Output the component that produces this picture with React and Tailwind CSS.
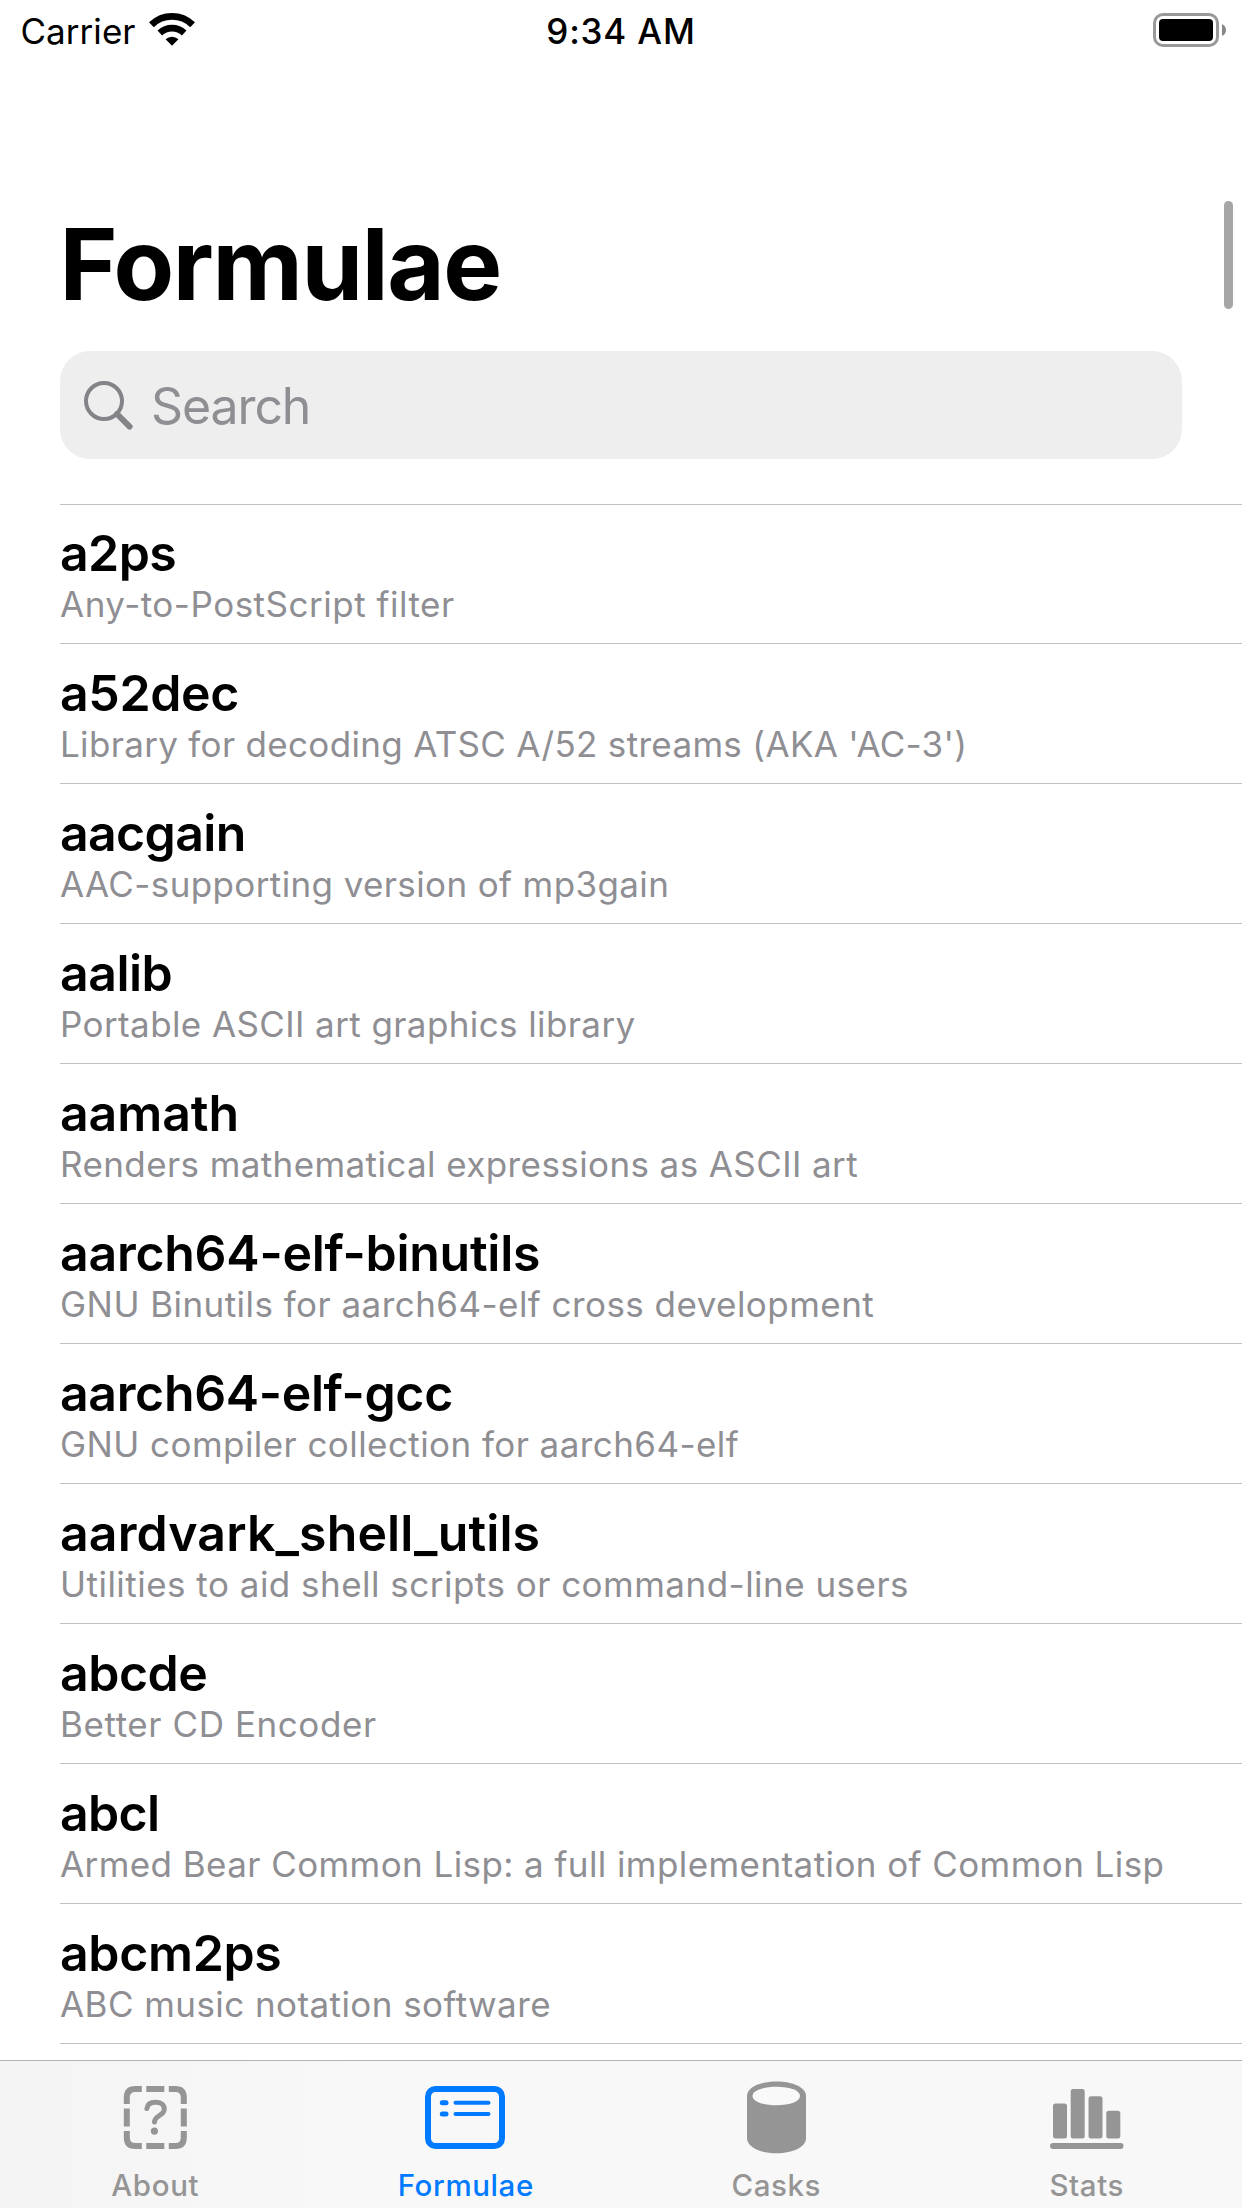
import React from "react";

const FORMULAE = [
  { name: "a2ps", nameTracking: "tracking-[-0.6px]", desc: "Any-to-PostScript filter", descTracking: "tracking-[0.51px]" },
  { name: "a52dec", nameTracking: "tracking-[-0.35px]", desc: "Library for decoding ATSC A/52 streams (AKA 'AC-3')", descTracking: "tracking-[0.32px]" },
  { name: "aacgain", nameTracking: "tracking-[-0.65px]", desc: "AAC-supporting version of mp3gain", descTracking: "tracking-[0.38px]" },
  { name: "aalib", nameTracking: "tracking-[-0.5px]", desc: "Portable ASCII art graphics library", descTracking: "tracking-[0.4px]" },
  { name: "aamath", nameTracking: "tracking-[-0.1px]", desc: "Renders mathematical expressions as ASCII art", descTracking: "tracking-[0.4px]" },
  { name: "aarch64-elf-binutils", nameTracking: "tracking-[-0.26px]", desc: "GNU Binutils for aarch64-elf cross development", descTracking: "tracking-[0.45px]" },
  { name: "aarch64-elf-gcc", nameTracking: "tracking-[-0.35px]", desc: "GNU compiler collection for aarch64-elf", descTracking: "tracking-[0.43px]" },
  { name: "aardvark_shell_utils", nameTracking: "tracking-[0.12px]", desc: "Utilities to aid shell scripts or command-line users", descTracking: "tracking-[0.48px]" },
  { name: "abcde", nameTracking: "tracking-[-0.5px]", desc: "Better CD Encoder", descTracking: "tracking-[0.58px]" },
  { name: "abcl", nameTracking: "tracking-[-0.65px]", desc: "Armed Bear Common Lisp: a full implementation of Common Lisp", descTracking: "tracking-[0.42px]" },
  { name: "abcm2ps", nameTracking: "tracking-[-0.35px]", desc: "ABC music notation software", descTracking: "tracking-[0.43px]" },
];

function WifiIcon() {
  return (
    <svg className="ml-[13px] mt-[13px] h-[33px] w-[46px] shrink-0" viewBox="0 0 46 33" fill="none">
      <path d="M2.4 11.8A29.5 29.5 0 0 1 43.6 11.8" stroke="#000" strokeWidth="6.8" />
      <path d="M10.8 20A17.6 17.6 0 0 1 35.2 20" stroke="#000" strokeWidth="6.6" />
      <path d="M16.6 26.3A9.2 9.2 0 0 1 29.4 26.3L23 32.7Z" fill="#000" />
    </svg>
  );
}

function StatusBar() {
  return (
    <header className="grid h-[60px] grid-cols-3 text-[35px] leading-[63px]">
      <div className="flex pl-[20.5px]">
        <span className="tracking-[0.05px]">Carrier</span>
        <WifiIcon />
      </div>
      <div className="text-center font-medium tracking-[0.8px]">9:34 AM</div>
      <div className="flex justify-end pt-[13px] pr-[16px]">
        <svg className="h-[34px] w-[73px]" viewBox="0 0 73 34">
          <rect x="1.5" y="1.5" width="63" height="31" rx="8.5" fill="none" stroke="#999" strokeWidth="3" />
          <rect x="6" y="6" width="54" height="22" rx="4" fill="#000" />
          <path d="M69 11Q73 13 73 17T69 23Z" fill="#888" />
        </svg>
      </div>
    </header>
  );
}

function SearchField() {
  return (
    <div className="mt-[33px] mr-[60px] ml-[60px] flex h-[108px] shrink-0 items-center rounded-[30px] bg-[#eeeeef] pl-[24px]">
      <svg className="h-[50px] w-[50px]" viewBox="0 0 50 50" fill="none" stroke="#848488">
        <circle cx="20" cy="21" r="18" strokeWidth="4" />
        <path d="M33 34L45.6 46.6" strokeWidth="6" strokeLinecap="round" />
      </svg>
      <span className="mt-[2px] ml-[17px] text-[50px] leading-[60px] tracking-[-1.1px] text-[#8e8e93]">Search</span>
    </div>
  );
}

function FormulaRow({ name, desc, nameTracking, descTracking }) {
  return (
    <li className="ml-[60px] flex h-[140px] shrink-0 flex-col justify-end border-b border-[#c1c1c3] pb-[18px] first:border-t">
      <h2 className={"text-[50px] leading-[60px] font-semibold whitespace-nowrap " + nameTracking}>{name}</h2>
      <p className={"text-[35px] leading-[42px] whitespace-nowrap text-[#8e8e93] " + descTracking}>{desc}</p>
    </li>
  );
}

function AboutIcon() {
  return (
    <svg className="h-[76px] w-[80px]" viewBox="0 0 80 76" fill="none" stroke="#959595" strokeWidth="6">
      <path d="M11.8 26V19.5Q11.8 11 20.3 11H26.8M31.3 11H49.3M53.8 11H60.3Q68.8 11 68.8 19.5V26M68.8 30.5V48.5M68.8 53V59.5Q68.8 68 60.3 68H53.8M49.3 68H31.3M26.8 68H20.3Q11.8 68 11.8 59.5V53M11.8 48.5V30.5" />
      <path d="M31.9 30.5C32.5 26 35.8 24.3 40.6 24.3C46.3 24.3 49.3 27 49.3 31.2C49.3 37.5 39.5 37.5 39.5 44" strokeWidth="5" strokeLinecap="round" strokeLinejoin="round" />
      <circle cx="39.4" cy="53.1" r="3.6" fill="#959595" stroke="none" />
    </svg>
  );
}

function FormulaeIcon() {
  return (
    <svg className="mr-[2px] h-[76px] w-[80px]" viewBox="0 0 80 76" fill="none" stroke="#007aff">
      <rect x="3" y="11" width="74" height="57" rx="7.5" strokeWidth="6" />
      <path d="M17.3 24.8H21M17.3 36H21" strokeWidth="5" strokeLinecap="round" />
      <path d="M30.5 24.8H63.5M30.5 36H63.5" strokeWidth="4" strokeLinecap="round" />
    </svg>
  );
}

function CasksIcon() {
  return (
    <svg className="h-[76px] w-[80px]" viewBox="0 0 80 76">
      <path d="M11 18C11 9.5 24 3.5 40.5 3.5S70 9.5 70 18V60C70 69 57 75.2 40.5 75.2S11 69 11 60Z" fill="#959595" />
      <path d="M16.5 18C16.5 12.5 27 8.8 40.5 8.8S64 12.5 64 18S54 27.3 40.5 27.3S16.5 23.5 16.5 18Z" fill="#f9f9f9" />
    </svg>
  );
}

function StatsIcon() {
  return (
    <svg className="h-[76px] w-[80px]" viewBox="0 0 80 76" fill="#959595">
      <rect x="6" y="25.5" width="14" height="35" rx="2.5" />
      <rect x="23.7" y="11" width="14" height="49.5" rx="2.5" />
      <rect x="41.5" y="18.3" width="14" height="42.2" rx="2.5" />
      <rect x="59.3" y="32.7" width="14" height="27.8" rx="2.5" />
      <rect x="3" y="65" width="73.5" height="6" rx="3" />
    </svg>
  );
}

const TABS = [
  { label: "About", Icon: AboutIcon },
  { label: "Formulae", Icon: FormulaeIcon, active: true },
  { label: "Casks", Icon: CasksIcon },
  { label: "Stats", Icon: StatsIcon },
];

function TabBar() {
  return (
    <nav className="mt-[16px] grid h-[148px] shrink-0 grid-cols-4 border-t border-[#b2b2b2] bg-linear-to-r from-[#f4f4f4] to-[#f8f8f8] to-30%">
      {TABS.map(({ label, Icon, active }) => (
        <div key={label} className="flex flex-col items-center pt-[17px]">
          <Icon />
          <span
            className={
              "mt-[13px] text-[29.5px] leading-[36px] font-medium tracking-[0.6px] " +
              (active ? "text-[#007aff]" : "text-[#959595]")
            }
          >
            {label}
          </span>
        </div>
      ))}
    </nav>
  );
}

export default function App() {
  return (
    <div className="relative flex h-[2208px] w-[1242px] flex-col overflow-hidden bg-white font-['Inter',sans-serif] text-black">
      <StatusBar />
      <h1 className="mt-[144px] ml-[59.5px] h-[114px] text-[99px] leading-[120px] font-bold tracking-[-1.35px]">Formulae</h1>
      <SearchField />
      <ul className="mt-[45px] flex shrink-0 flex-col">
        {FORMULAE.map((f) => (
          <FormulaRow key={f.name} {...f} />
        ))}
      </ul>
      <TabBar />
      <div className="absolute top-[201px] right-[9px] h-[108px] w-[9px] rounded-full bg-[#a6a6a6]" />
    </div>
  );
}
